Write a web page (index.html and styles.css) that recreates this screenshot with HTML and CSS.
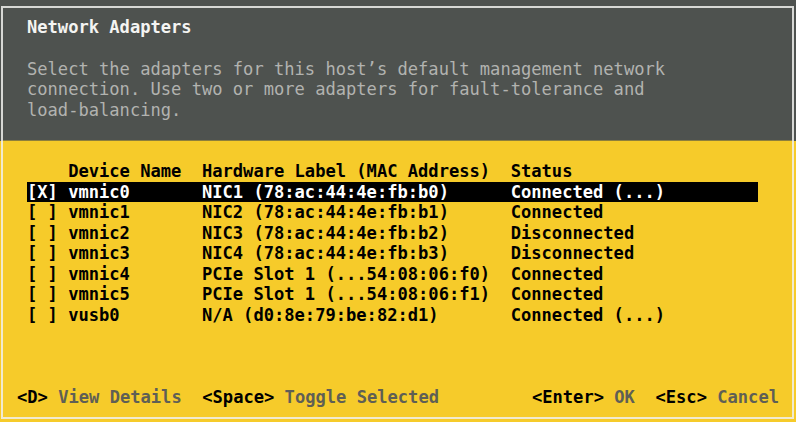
FILE: index.html
```html
<!DOCTYPE html>
<html>
<head>
<meta charset="utf-8">
<link rel="stylesheet" href="styles.css">
</head>
<body>
<div class="frame">
  <div class="head">
    <div class="title">Network Adapters</div>
    <div class="desc">
      <div>Select the adapters for this host’s default management network</div>
      <div>connection. Use two or more adapters for fault-tolerance and</div>
      <div>load-balancing.</div>
    </div>
  </div>
  <div class="main">
    <div class="table">
      <div class="row hdr"><span></span><span>Device Name</span><span>Hardware Label (MAC Address)</span><span>Status</span></div>
      <div class="row sel"><span>[X]</span><span>vmnic0</span><span>NIC1 (78:ac:44:4e:fb:b0)</span><span>Connected (...)</span></div>
      <div class="row"><span>[ ]</span><span>vmnic1</span><span>NIC2 (78:ac:44:4e:fb:b1)</span><span>Connected</span></div>
      <div class="row"><span>[ ]</span><span>vmnic2</span><span>NIC3 (78:ac:44:4e:fb:b2)</span><span>Disconnected</span></div>
      <div class="row"><span>[ ]</span><span>vmnic3</span><span>NIC4 (78:ac:44:4e:fb:b3)</span><span>Disconnected</span></div>
      <div class="row"><span>[ ]</span><span>vmnic4</span><span>PCIe Slot 1 (...54:08:06:f0)</span><span>Connected</span></div>
      <div class="row"><span>[ ]</span><span>vmnic5</span><span>PCIe Slot 1 (...54:08:06:f1)</span><span>Connected</span></div>
      <div class="row"><span>[ ]</span><span>vusb0</span><span>N/A (d0:8e:79:be:82:d1)</span><span>Connected (...)</span></div>
    </div>
    <div class="footer">
      <div class="keys"><span class="k">&lt;D&gt;</span> <span class="a">View Details</span>  <span class="k">&lt;Space&gt;</span> <span class="a">Toggle Selected</span></div>
      <div class="keys"><span class="k">&lt;Enter&gt;</span> <span class="a">OK</span>  <span class="k">&lt;Esc&gt;</span> <span class="a">Cancel</span></div>
    </div>
  </div>
</div>
</body>
</html>
```

FILE: styles.css
```css
html, body {
  margin: 0;
  padding: 0;
}
body {
  width: 796px;
  height: 422px;
  overflow: hidden;
  background: linear-gradient(#4e524f 0, #4e524f 141px, #f6cb2a 141px);
  font-family: "DejaVu Sans Mono", "Liberation Mono", monospace;
  font-size: 17.1px;
  line-height: 20.5px;
  box-sizing: border-box;
  padding: 6px 2px 3px 1px;
}
.frame {
  height: 100%;
  box-sizing: border-box;
  border: 2px solid rgba(240, 240, 236, 0.85);
  display: flex;
  flex-direction: column;
}
.head {
  height: 123px;
  flex: none;
  border-bottom: 1px solid #8d7f3c;
  padding: 9px 0 0 24px;
  box-sizing: content-box;
}
.title {
  color: #f4f4f2;
  font-weight: bold;
}
.desc {
  margin-top: 21px;
  color: #b2b3b0;
}
.main {
  flex: 1;
  display: flex;
  flex-direction: column;
  padding: 20px 13px 10px 14px;
}
.table {
  margin-left: 10px;
  width: 731px;
}
.row {
  display: grid;
  grid-template-columns: 4ch 13ch 30ch 1fr;
  height: 20.5px;
  color: #000;
  font-weight: bold;
  white-space: pre;
}
.row.sel {
  background: #000;
  color: #fff;
}
.footer {
  margin-top: auto;
  display: flex;
  justify-content: space-between;
  white-space: pre;
  font-weight: bold;
}
.k { color: #000; }
.a { color: #5f5f55; }
```
